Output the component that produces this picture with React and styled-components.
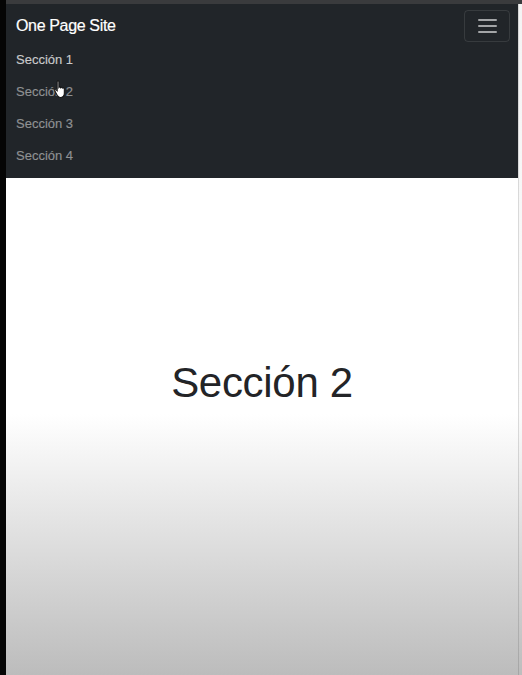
import styled, { createGlobalStyle } from "styled-components";

const GlobalStyle = createGlobalStyle`
    html, body {
        margin: 0;
        padding: 0;
        background: #000;
        font-family: "Liberation Sans", Arial, sans-serif;
    }
`;

const Frame = styled.div`
    display: flex;
    width: 522px;
    height: 675px;
    overflow: hidden;
    background: #000;
`;

const LeftEdge = styled.div`
    width: 6px;
    flex: none;
    background: #050505;
`;

const Viewport = styled.div`
    flex: 1;
    display: flex;
    flex-direction: column;
`;

const TopStrip = styled.div`
    height: 4px;
    flex: none;
    background: #3a3b3d;
`;

const Body = styled.div`
    flex: 1;
    display: flex;
`;

const Page = styled.div`
    width: 512px;
    display: flex;
    flex-direction: column;
`;

const ScrollEdge = styled.div`
    flex: 1;
    border-left: 1px solid rgba(0, 0, 0, 0.12);
    background: linear-gradient(to bottom, #f4f4f4 0, #fafafa 411px, #bdbdbd 100%);
`;

const Navbar = styled.nav`
    position: relative;
    background: #212529;
    padding: 6px 8px 7px 10px;
`;

const BrandRow = styled.div`
    display: flex;
    align-items: center;
    justify-content: space-between;
    height: 32px;
    margin-bottom: 1px;
`;

const Brand = styled.a`
    color: #fff;
    font-size: 16px;
    letter-spacing: -0.35px;
    text-decoration: none;
    -webkit-text-stroke: 0.2px #fff;
`;

const Toggler = styled.button`
    width: 46px;
    height: 32px;
    box-sizing: border-box;
    border: 1px solid rgba(255, 255, 255, 0.1);
    border-radius: 4px;
    background: transparent;
    display: flex;
    flex-direction: column;
    align-items: center;
    justify-content: center;
    gap: 4px;
    padding: 0;
`;

const Bar = styled.span`
    display: block;
    width: 19px;
    height: 2px;
    border-radius: 1px;
    background: #a3a5a7;
`;

const NavList = styled.ul`
    list-style: none;
    margin: 0;
    padding: 0;
`;

const NavItem = styled.li`
    height: 32px;
    display: flex;
    align-items: center;
    font-size: 13px;
    color: ${(p) => (p.$active ? "#c9cacb" : "#8f9193")};
    -webkit-text-stroke: 0.15px currentColor;
`;

const Cursor = styled.svg`
    position: absolute;
    left: 47px;
    top: 76px;
`;

const Section = styled.section`
    flex: 1;
    display: flex;
    align-items: center;
    justify-content: center;
    padding-bottom: 88px;
    background: linear-gradient(to bottom, #fff 0, #fff 236px, #bcbcbc 100%);
`;

const Title = styled.h1`
    margin: 0;
    font-size: 42px;
    font-weight: 400;
    color: #232427;
    letter-spacing: -0.3px;
`;

const links = ["Sección 1", "Sección 2", "Sección 3", "Sección 4"];

const App = () => {
    return (
        <Frame>
            <GlobalStyle />
            <LeftEdge />
            <Viewport>
                <TopStrip />
                <Body>
                    <Page>
                        <Navbar>
                            <BrandRow>
                                <Brand href="#">One Page Site</Brand>
                                <Toggler>
                                    <Bar />
                                    <Bar />
                                    <Bar />
                                </Toggler>
                            </BrandRow>
                            <NavList>
                                {links.map((l, i) => (
                                    <NavItem key={l} $active={i === 0}>
                                        {l}
                                    </NavItem>
                                ))}
                            </NavList>
                            <Cursor width="16" height="19" viewBox="0 0 12 15">
                                <path
                                    d="M3 1.2c0-.7 1.3-.7 1.3 0V6l.3-.4c.5-.3 1.1 0 1.1.5l.3-.2c.5-.3 1.1 0 1.1.5l.3-.1c.6-.2 1.2.2 1.2.8v3.4c0 1.6-1 3-2.6 3.3H5.6C4.5 13.8 3.6 13 3 12L1.2 8.6c-.3-.6.4-1.2 1-.8L3 8.6z"
                                    fill="#fff"
                                    stroke="#111"
                                    strokeWidth="0.8"
                                />
                            </Cursor>
                        </Navbar>
                        <Section>
                            <Title>Sección 2</Title>
                        </Section>
                    </Page>
                    <ScrollEdge />
                </Body>
            </Viewport>
        </Frame>
    );
};

export default App;
